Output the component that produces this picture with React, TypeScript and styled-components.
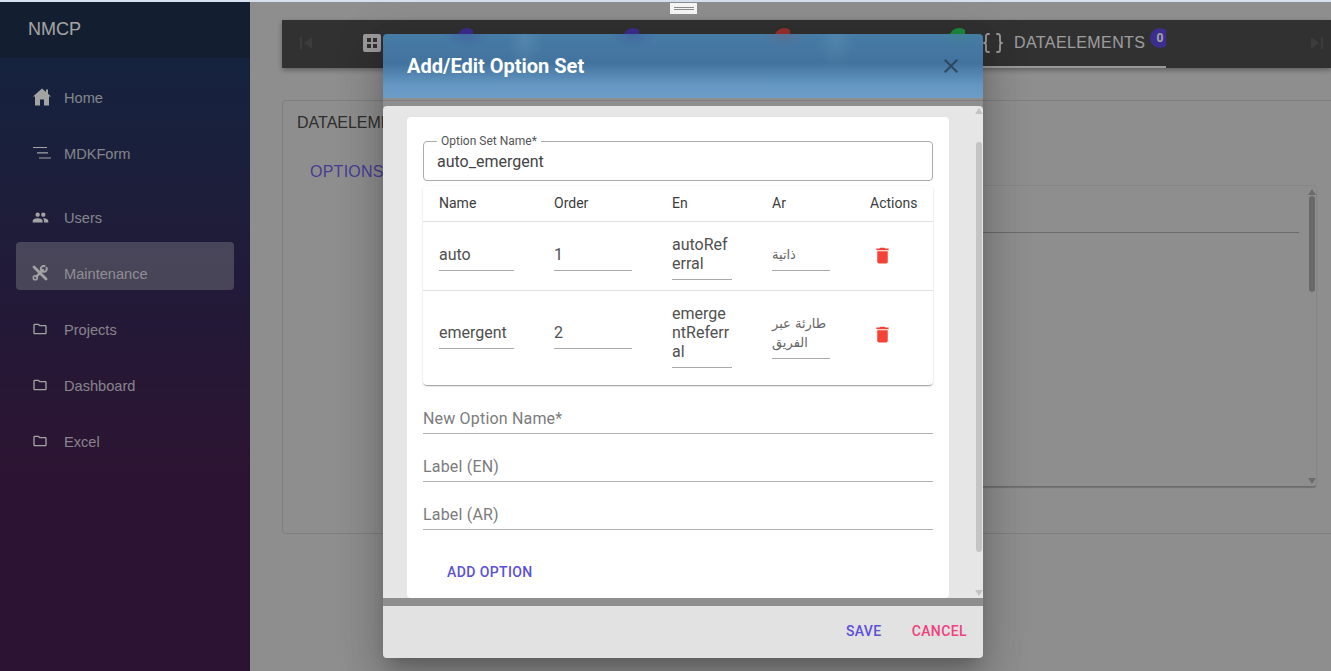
import React from "react";
import styled, { createGlobalStyle } from "styled-components";
import { Braces } from "lucide-react";

const Global = createGlobalStyle`
  html, body { margin: 0; padding: 0; height: 100%; overflow: hidden; background: #d6e0ee; }
  #root { height: 100%; }
  * { box-sizing: border-box; }
`;

const Page = styled.div`
  width: 1331px;
  height: 671px;
  display: flex;
  flex-direction: column;
  overflow: hidden;
  font-family: "Liberation Sans", Arial, sans-serif;
`;
const TopStrip = styled.div`
  height: 2px;
  flex: none;
  background: #d6e0ee;
`;
const Stage = styled.div`
  position: relative;
  flex: 1;
  display: flex;
  min-height: 0;
  background: #dfdfdf;
`;
const Sidebar = styled.aside`
  width: 250px;
  flex: none;
  display: flex;
  flex-direction: column;
`;
const Brand = styled.div`
  height: 56px;
  flex: none;
  padding: 17px 0 0 28px;
  font-size: 18px;
  line-height: 20px;
  color: #fff;
  background: #1f2f4b;
`;
const NavList = styled.nav`
  flex: 1;
  padding: 8px 16px;
  background: linear-gradient(180deg, #213762 0%, #461f50 68%);
`;
const NavItem = styled.div<{ $active?: boolean; $gapAfter?: number }>`
  height: 48px;
  margin-bottom: ${(p) => p.$gapAfter ?? 8}px;
  padding: 24px 0 0 16px;
  display: flex;
  align-items: flex-start;
  border-radius: 4px;
  background: ${(p) => (p.$active ? "rgba(255,255,255,0.31)" : "transparent")};
`;
const NavIcon = styled.span`
  width: 32px;
  height: 16px;
  flex: none;
  display: flex;
  align-items: center;
  color: #fff;
  svg { display: block; margin-top: -2px; }
`;
const NavLabel = styled.span`
  font-size: 14.6px;
  line-height: 16px;
  color: rgba(255, 255, 255, 0.78);
`;
const Main = styled.main`
  flex: 1;
  min-width: 0;
  padding: 18px 0 0 32px;
  overflow: hidden;
`;
const TabBar = styled.div`
  height: 48px;
  display: flex;
  background: #4d4d4d;
  box-shadow: 0 2px 5px rgba(0, 0, 0, 0.35);
`;
const ScrollBtn = styled.div<{ $end?: boolean }>`
  flex: none;
  width: ${(p) => (p.$end ? "24px" : "64px")};
  margin-left: ${(p) => (p.$end ? "auto" : "0")};
  margin-right: ${(p) => (p.$end ? "2px" : "0")};
  padding: ${(p) => (p.$end ? "0 0 2px" : "0 0 2px 12px")};
  display: flex;
  align-items: center;
  color: #5e5e5e;
`;
const Tab = styled.div<{ $width: number; $pad: number; $active?: boolean }>`
  position: relative;
  flex: none;
  width: ${(p) => p.$width}px;
  padding: 0 0 3px ${(p) => p.$pad}px;
  display: flex;
  align-items: center;
  overflow: hidden;
  color: #f4f4f4;
  box-shadow: ${(p) => (p.$active ? "inset 0 -2px 0 #f0f0f0" : "none")};
`;
const TabLabel = styled.span`
  margin-left: 9px;
  font-size: 16px;
  letter-spacing: 0.4px;
  color: #f4f4f4;
  white-space: nowrap;
`;
const Badge = styled.span<{ $bg: string }>`
  position: absolute;
  top: 8px;
  right: -4px;
  width: 20px;
  height: 20px;
  border-radius: 50%;
  background: ${(p) => p.$bg};
  color: #fff;
  font: 700 12px/20px Roboto, sans-serif;
  text-align: center;
`;
const Card = styled.section`
  width: 1100px;
  height: 434px;
  margin-top: 32px;
  padding: 12px 14px 0;
  border: 1px solid #c5c5c5;
  border-radius: 4px;
`;
const CardTitle = styled.div`
  font-size: 16px;
  line-height: 20px;
  color: #484848;
`;
const CardTab = styled.div`
  margin: 29px 0 0 13px;
  font-size: 16px;
  line-height: 20px;
  letter-spacing: 0.25px;
  color: #6f5fe8;
`;
const GridBox = styled.div`
  width: 917px;
  height: 302px;
  margin: 3px 0 0 103px;
  display: flex;
  border: 1px solid #d2d2d2;
  border-bottom-color: #a8a8a8;
  border-radius: 4px;
  box-shadow: 0 1px 1px rgba(0, 0, 0, 0.2);
`;
const GridBody = styled.div`
  flex: 1;
  margin-right: 8px;
`;
const GridHead = styled.div`
  height: 47px;
  border-bottom: 1px solid #a6a6a6;
`;
const Rail = styled.div`
  width: 9px;
  flex: none;
  display: flex;
  flex-direction: column;
  align-items: center;
`;
const Arrow = styled.span<{ $down?: boolean; $color: string; $offset: number }>`
  flex: none;
  width: 0;
  height: 0;
  border-left: 4px solid transparent;
  border-right: 4px solid transparent;
  ${(p) =>
    p.$down
      ? `border-top: 6px solid ${p.$color}; margin-top: auto; margin-bottom: ${p.$offset}px;`
      : `border-bottom: 6px solid ${p.$color}; margin-top: ${p.$offset}px;`}
`;
const Thumb = styled.span<{ $gap: number; $height: number; $color: string }>`
  flex: none;
  width: 6px;
  height: ${(p) => p.$height}px;
  margin-top: ${(p) => p.$gap}px;
  border-radius: 3px;
  background: ${(p) => p.$color};
`;
const Overlay = styled.div`
  position: absolute;
  inset: 0;
  background: rgba(0, 0, 0, 0.36);
`;
const Handle = styled.div`
  position: absolute;
  top: 1px;
  left: 670px;
  width: 27px;
  height: 11px;
  background: #f6f6f6;
  display: flex;
  flex-direction: column;
  justify-content: center;
  align-items: center;
  gap: 1px;
  span { width: 20px; height: 1px; background: #8d8d8d; }
`;
const Modal = styled.div`
  position: absolute;
  top: 32px;
  left: 383px;
  width: 600px;
  height: 624px;
  display: flex;
  flex-direction: column;
  border-radius: 4px;
  font-family: Roboto, "DejaVu Sans", sans-serif;
  box-shadow: 0 11px 15px -7px rgba(0, 0, 0, 0.2), 0 24px 38px 3px rgba(0, 0, 0, 0.14),
    0 9px 46px 8px rgba(0, 0, 0, 0.12);
`;
const ModalHeader = styled.header`
  height: 64px;
  flex: none;
  padding: 0 20px 0 24px;
  display: flex;
  align-items: center;
  justify-content: space-between;
  border-radius: 4px 4px 0 0;
  background:
    radial-gradient(ellipse 24px 14px at 83px 0px, rgba(62, 48, 150, 0.24), transparent),
    radial-gradient(ellipse 24px 14px at 250px 0px, rgba(62, 48, 150, 0.24), transparent),
    radial-gradient(ellipse 24px 14px at 401px 0px, rgba(170, 60, 60, 0.18), transparent),
    radial-gradient(ellipse 24px 14px at 576px 0px, rgba(40, 150, 90, 0.18), transparent),
    radial-gradient(ellipse 18px 26px at 142px 8px, rgba(150, 190, 215, 0.16), transparent),
    radial-gradient(ellipse 18px 26px at 453px 8px, rgba(150, 190, 215, 0.14), transparent),
    linear-gradient(180deg, #467ca6 0%, #42739e 45%, #6497c2 80%, #6b9dc7 100%);
`;
const ModalTitle = styled.h2`
  margin: 0;
  font-size: 20px;
  font-weight: 700;
  color: #fff;
`;
const CloseIcon = styled.svg`
  width: 24px;
  height: 24px;
  fill: #2c4860;
`;
const ModalBody = styled.div`
  height: 492px;
  flex: none;
  margin-top: 8px;
  display: flex;
  border-radius: 4px 4px 0 0;
  background: #e6e6e6;
  overflow: hidden;
`;
const ScrollArea = styled.div`
  flex: 1;
  min-width: 0;
  padding: 11px 25px 0 24px;
`;
const FormCard = styled.div`
  height: 481px;
  padding: 17px 16px 0;
  border-radius: 4px;
  background: #fff;
`;
const Outlined = styled.fieldset`
  margin: 0;
  padding: 4px 13px 9px;
  border: 1px solid #ababab;
  border-radius: 4px;
  min-width: 0;
`;
const Legend = styled.legend`
  margin-left: 0;
  padding: 0 4px 0 4px;
  font-size: 12px;
  line-height: 14px;
  color: #555;
`;
const OutlinedValue = styled.div`
  font-size: 16px;
  line-height: 19px;
  color: #444;
`;
const TablePaper = styled.div`
  margin: 5px 0 1px;
  border-radius: 4px;
  background: #fff;
  box-shadow: 0 2px 1px -1px rgba(0, 0, 0, 0.2), 0 1px 1px 0 rgba(0, 0, 0, 0.14),
    0 1px 3px 0 rgba(0, 0, 0, 0.12);
`;
const Row = styled.div<{ $head?: boolean; $last?: boolean }>`
  display: grid;
  grid-template-columns: 115px 118px 100px 98px 79px;
  align-items: center;
  height: ${(p) => (p.$head ? "36px" : "auto")};
  padding: ${(p) => (p.$head ? "0 0 2px" : p.$last ? "8px 0 17px" : "8px 0 10px")};
  border-bottom: ${(p) => (p.$last ? "none" : "1px solid #e0e0e0")};
`;
const HeadCell = styled.div`
  padding-left: 16px;
  font-size: 14px;
  color: #3c3c3c;
`;
const Cell = styled.div`
  padding-left: 16px;
  min-width: 0;
`;
const CellInput = styled.div<{ $width: number; $rtlText?: boolean }>`
  width: ${(p) => p.$width}px;
  padding: 5px 0 6px;
  border-bottom: 1px solid #a9a9a9;
  font-size: ${(p) => (p.$rtlText ? "13px" : "16px")};
  line-height: 19px;
  color: ${(p) => (p.$rtlText ? "#666" : "#505050")};
  word-break: break-all;
  font-family: ${(p) => (p.$rtlText ? '"DejaVu Sans", sans-serif' : "Roboto, sans-serif")};
`;
const TrashIcon = styled.svg`
  display: block;
  width: 21px;
  height: 21px;
  margin: 1px 0 0 2px;
  fill: #f44336;
`;
const LineField = styled.div`
  height: 48px;
  padding-bottom: 5px;
  display: flex;
  align-items: flex-end;
  border-bottom: 1px solid #b0b0b0;
  font-size: 16px;
  line-height: 19px;
  letter-spacing: 0.18px;
  color: #7c7c7c;
`;
const TextButton = styled.button<{ $color: string }>`
  padding: 0;
  border: 0;
  background: none;
  font: 500 14px/16px Roboto, sans-serif;
  letter-spacing: 0.4px;
  color: ${(p) => p.$color};
`;
const AddRow = styled.div`
  padding: 32px 0 0 24px;
`;
const ModalFooter = styled.footer`
  height: 52px;
  flex: none;
  margin-top: 8px;
  padding: 0 16px 2px;
  display: flex;
  align-items: center;
  justify-content: flex-end;
  gap: 30px;
  background: #e2e2e2;
  border-radius: 0 0 4px 4px;
`;

const Svg24 = ({ d, size = 24 }: { d: string; size?: number }) => (
  <svg width={size} height={size} viewBox="0 0 24 24" fill="currentColor">
    <path d={d} />
  </svg>
);

const FolderI = () => (
  <Svg24
    size={16}
    d="M9.17 6l2 2H20v10H4V6h5.17M10 4H4c-1.1 0-1.99.9-1.99 2L2 18c0 1.1.9 2 2 2h16c1.1 0 2-.9 2-2V8c0-1.1-.9-2-2-2h-8l-2-2z"
  />
);
const HomeI = () => (
  <svg width="18" height="18" viewBox="0 0 18 18" fill="currentColor" style={{ marginLeft: 1 }}>
    <path d="M9 0.5 L13 4 V1.5 H15 V5.8 L18 8.6 H16 V17.5 H11 V11.5 H7 V17.5 H2 V8.6 H0 Z" />
  </svg>
);
const FormI = () => (
  <svg width="20" height="14" viewBox="0 0 20 14" fill="none" stroke="currentColor" strokeWidth="1.2">
    <path d="M1 1.5H15M5 6.8H16M7 12H19" />
  </svg>
);
const UsersI = () => (
  <Svg24
    size={17}
    d="M16 11c1.66 0 2.99-1.34 2.99-3S17.66 5 16 5c-1.66 0-3 1.34-3 3s1.34 3 3 3zm-8 0c1.66 0 2.99-1.34 2.99-3S9.66 5 8 5C6.34 5 5 6.34 5 8s1.34 3 3 3zm0 2c-2.33 0-7 1.17-7 3.5V19h14v-2.5c0-2.33-4.67-3.5-7-3.5zm8 0c-.29 0-.62.02-.97.05 1.16.84 1.97 1.97 1.97 3.45V19h6v-2.5c0-2.33-4.67-3.5-7-3.5z"
  />
);
const ToolsI = () => (
  <svg width="16" height="16" viewBox="0 0 16 16" fill="none" stroke="currentColor" strokeLinecap="round">
    <path d="M2 2 L14 14" strokeWidth="2.8" />
    <path d="M4.6 11.4 L11 5" strokeWidth="2.4" />
    <circle cx="3.3" cy="12.7" r="2" strokeWidth="1.6" />
    <path d="M14.6 2.9 A3 3 0 1 1 12.6 1" strokeWidth="1.9" />
  </svg>
);
const GridI = () => (
  <svg width="18" height="18" viewBox="0 0 18 18">
    <path
      fill="currentColor"
      fillRule="evenodd"
      d="M2 0h14a2 2 0 0 1 2 2v14a2 2 0 0 1-2 2H2a2 2 0 0 1-2-2V2a2 2 0 0 1 2-2zM4 4v4h4V4zM10 4v4h4V4zM4 10v4h4v-4zM10 10v4h4v-4z"
    />
  </svg>
);
const RoundI = () => (
  <svg width="18" height="18" viewBox="0 0 18 18" fill="currentColor">
    <circle cx="9" cy="9" r="9" />
  </svg>
);

const nav: { label: string; icon: React.ReactNode; active?: boolean; gap?: number }[] = [
  { label: "Home", icon: <HomeI /> },
  { label: "MDKForm", icon: <FormI />, gap: 16 },
  { label: "Users", icon: <UsersI /> },
  { label: "Maintenance", icon: <ToolsI />, active: true },
  { label: "Projects", icon: <FolderI /> },
  { label: "Dashboard", icon: <FolderI /> },
  { label: "Excel", icon: <FolderI /> },
];

const rows = [
  { name: "auto", order: "1", en: "autoReferral", ar: "ذاتية" },
  { name: "emergent", order: "2", en: "emergentReferral", ar: "طارئة عبر الفريق" },
];

const TRASH = "M6 19c0 1.1.9 2 2 2h8c1.1 0 2-.9 2-2V7H6v12zM19 4h-3.5l-1-1h-5l-1 1H5v2h14V4z";
const CLOSE =
  "M19 6.41 17.59 5 12 10.59 6.41 5 5 6.41 10.59 12 5 17.59 6.41 19 12 13.41 17.59 19 19 17.59 13.41 12z";

export default function App() {
  return (
    <Page>
      <Global />
      <TopStrip />
      <Stage>
        <Sidebar>
          <Brand>NMCP</Brand>
          <NavList>
            {nav.map((n) => (
              <NavItem key={n.label} $active={n.active} $gapAfter={n.gap}>
                <NavIcon>{n.icon}</NavIcon>
                <NavLabel>{n.label}</NavLabel>
              </NavItem>
            ))}
          </NavList>
        </Sidebar>
        <Main>
          <TabBar>
            <ScrollBtn>
              <Svg24 size={24} d="M6 6h2v12H6zM18 6l-8 6 8 6z" />
            </ScrollBtn>
            <Tab $width={127} $pad={17}>
              <GridI />
              <Badge $bg="#5f48e0" />
            </Tab>
            <Tab $width={166} $pad={43}>
              <RoundI />
              <Badge $bg="#5f48e0" />
            </Tab>
            <Tab $width={151} $pad={0}>
              <Badge $bg="#f04d45" />
            </Tab>
            <Tab $width={175} $pad={0}>
              <Badge $bg="#2fd861" />
            </Tab>
            <Tab $width={201} $pad={16} $active>
              <Braces size={24} strokeWidth={1.8} />
              <TabLabel>DATAELEMENTS</TabLabel>
              <Badge $bg="#5f48e0">0</Badge>
            </Tab>
            <ScrollBtn $end>
              <Svg24 size={24} d="M16 6h2v12h-2zM6 6l8 6-8 6z" />
            </ScrollBtn>
          </TabBar>
          <Card>
            <CardTitle>DATAELEMENTS</CardTitle>
            <CardTab>OPTIONS</CardTab>
            <GridBox>
              <GridBody>
                <GridHead />
              </GridBody>
              <Rail>
                <Arrow $color="#a8a8a8" $offset={3} />
                <Thumb $color="#a4a4a4" $gap={1} $height={96} />
                <Arrow $down $color="#a8a8a8" $offset={2} />
              </Rail>
            </GridBox>
          </Card>
        </Main>
        <Overlay />
        <Handle>
          <span />
          <span />
        </Handle>
        <Modal>
          <ModalHeader>
            <ModalTitle>Add/Edit Option Set</ModalTitle>
            <CloseIcon viewBox="0 0 24 24">
              <path d={CLOSE} />
            </CloseIcon>
          </ModalHeader>
          <ModalBody>
            <ScrollArea>
              <FormCard>
                <Outlined>
                  <Legend>Option Set Name*</Legend>
                  <OutlinedValue>auto_emergent</OutlinedValue>
                </Outlined>
                <TablePaper>
                  <Row $head>
                    <HeadCell>Name</HeadCell>
                    <HeadCell>Order</HeadCell>
                    <HeadCell>En</HeadCell>
                    <HeadCell>Ar</HeadCell>
                    <HeadCell>Actions</HeadCell>
                  </Row>
                  {rows.map((r, i) => (
                    <Row key={r.name} $last={i === rows.length - 1}>
                      <Cell>
                        <CellInput $width={75}>{r.name}</CellInput>
                      </Cell>
                      <Cell>
                        <CellInput $width={78}>{r.order}</CellInput>
                      </Cell>
                      <Cell>
                        <CellInput $width={60}>{r.en}</CellInput>
                      </Cell>
                      <Cell>
                        <CellInput $width={58} $rtlText>
                          {r.ar}
                        </CellInput>
                      </Cell>
                      <Cell>
                        <TrashIcon viewBox="0 0 24 24">
                          <path d={TRASH} />
                        </TrashIcon>
                      </Cell>
                    </Row>
                  ))}
                </TablePaper>
                <LineField>New Option Name*</LineField>
                <LineField>Label (EN)</LineField>
                <LineField>Label (AR)</LineField>
                <AddRow>
                  <TextButton $color="#5b50d6">ADD OPTION</TextButton>
                </AddRow>
              </FormCard>
            </ScrollArea>
            <Rail>
              <Arrow $color="#c4c4c4" $offset={2} />
              <Thumb $color="#c4c4c4" $gap={28} $height={410} />
              <Arrow $down $color="#c4c4c4" $offset={2} />
            </Rail>
          </ModalBody>
          <ModalFooter>
            <TextButton $color="#5b50d6">SAVE</TextButton>
            <TextButton $color="#f0417f">CANCEL</TextButton>
          </ModalFooter>
        </Modal>
      </Stage>
    </Page>
  );
}
